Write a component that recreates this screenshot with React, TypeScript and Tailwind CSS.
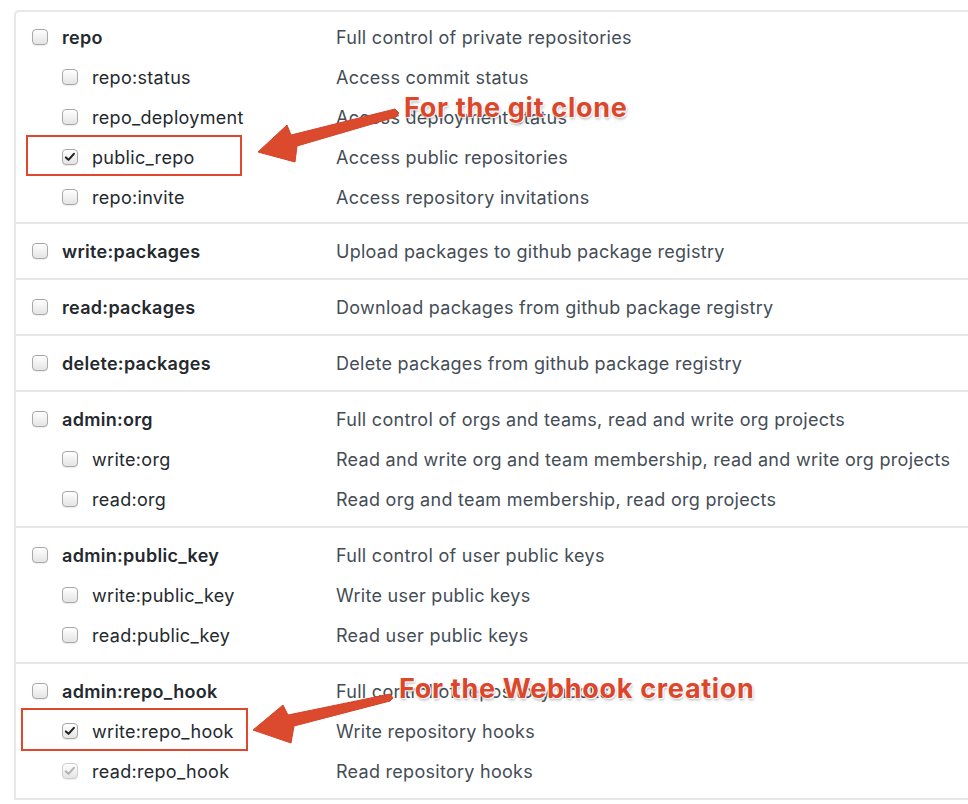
import React from 'react';

type Scope = {
  name: string;
  desc: string;
  checked?: boolean;
  disabled?: boolean;
  box?: { left: number; top: number; width: number; height: number };
};

type Group = Scope & { children?: Scope[] };

const groups: Group[] = [
  {
    name: 'repo',
    desc: 'Full control of private repositories',
    children: [
      { name: 'repo:status', desc: 'Access commit status' },
      { name: 'repo_deployment', desc: 'Access deployment status' },
      {
        name: 'public_repo',
        desc: 'Access public repositories',
        checked: true,
        box: { left: 10, top: -2, width: 216, height: 41 },
      },
      { name: 'repo:invite', desc: 'Access repository invitations' },
    ],
  },
  { name: 'write:packages', desc: 'Upload packages to github package registry' },
  { name: 'read:packages', desc: 'Download packages from github package registry' },
  { name: 'delete:packages', desc: 'Delete packages from github package registry' },
  {
    name: 'admin:org',
    desc: 'Full control of orgs and teams, read and write org projects',
    children: [
      { name: 'write:org', desc: 'Read and write org and team membership, read and write org projects' },
      { name: 'read:org', desc: 'Read org and team membership, read org projects' },
    ],
  },
  {
    name: 'admin:public_key',
    desc: 'Full control of user public keys',
    children: [
      { name: 'write:public_key', desc: 'Write user public keys' },
      { name: 'read:public_key', desc: 'Read user public keys' },
    ],
  },
  {
    name: 'admin:repo_hook',
    desc: 'Full control of repository hooks',
    children: [
      {
        name: 'write:repo_hook',
        desc: 'Write repository hooks',
        checked: true,
        box: { left: 5, top: -3, width: 227, height: 43 },
      },
      { name: 'read:repo_hook', desc: 'Read repository hooks', checked: true, disabled: true },
    ],
  },
];

const Checkbox = ({ checked, disabled }: { checked?: boolean; disabled?: boolean }) => (
  <span
    className={`inline-flex items-center justify-center w-4 h-4 shrink-0 rounded-[4px] border bg-gradient-to-b from-white to-[#e4e4e4] shadow-[0_1px_1px_rgba(0,0,0,0.08)] ${
      disabled ? 'border-[#cfcfcf]' : 'border-[#a8a8a8]'
    }`}
  >
    {checked && (
      <svg viewBox="0 0 16 16" className="w-3 h-3">
        <path
          d="M2.5 8.6 L6 11.8 L13.2 3.8"
          fill="none"
          stroke={disabled ? '#b3b3b3' : '#222'}
          strokeWidth="2.8"
          strokeLinecap="round"
          strokeLinejoin="round"
        />
      </svg>
    )}
  </span>
);

const Row = ({ scope, sub }: { scope: Scope; sub?: boolean }) => (
  <div className="relative flex items-center h-10">
    {scope.box && (
      <div
        className="absolute border-2 border-[#e0472c]"
        style={{ left: scope.box.left, top: scope.box.top, width: scope.box.width, height: scope.box.height }}
      />
    )}
    <div className={`flex items-center gap-[14px] w-[320px] shrink-0 ${sub ? 'pl-[46px]' : 'pl-4'}`}>
      <Checkbox checked={scope.checked} disabled={scope.disabled} />
      <span className={`text-[#24292e] tracking-[0.3px] ${sub ? 'font-normal' : 'font-semibold'}`}>{scope.name}</span>
    </div>
    <span className="text-[#444d56] tracking-[0.28px] whitespace-nowrap">{scope.desc}</span>
  </div>
);

const Arrow = ({ points }: { points: string }) => (
  <polygon points={points} fill="#dc4a2d" stroke="#d2432a" strokeWidth="1" strokeLinejoin="round" />
);

export default function App() {
  return (
    <div className="relative min-h-screen bg-white overflow-hidden pl-[14px] pt-[10px] font-['Inter',sans-serif] text-[18px]">
      <div className="border-l-2 border-t-2 border-[#e8e8e8] rounded-tl-[5px]">
        {groups.map((g, i) => (
          <div
            key={g.name}
            className={`border-b-2 border-[#e8e8e8] ${i === 0 ? 'py-[5px]' : 'py-[7px]'}`}
          >
            <Row scope={g} />
            {g.children?.map((c) => (
              <Row key={c.name} scope={c} sub />
            ))}
          </div>
        ))}
      </div>

      <svg className="absolute inset-0 pointer-events-none" width="968" height="804" viewBox="0 0 968 804">
        <Arrow points="258,152 287,125 291,135 395,109 399,113 396,117 297,146 295,162" />
        <Arrow points="253,730 283,705 288,715 390,694 393,698 390,701 294,726 291,743" />
      </svg>

      <div className="absolute left-[404px] top-[94px] text-[27px] font-bold leading-none text-[#dc472b] tracking-[0.7px] whitespace-nowrap font-['Inter',sans-serif] [text-shadow:0_0_2px_#fff,0_0_2px_#fff,1px_1px_1px_#fff,-1px_-1px_1px_#fff,1px_2px_3px_rgba(0,0,0,0.35)]">
        For the git clone
      </div>
      <div className="absolute left-[399px] top-[675px] text-[27px] font-bold leading-none text-[#dc472b] tracking-[0.7px] whitespace-nowrap font-['Inter',sans-serif] [text-shadow:0_0_2px_#fff,0_0_2px_#fff,1px_1px_1px_#fff,-1px_-1px_1px_#fff,1px_2px_3px_rgba(0,0,0,0.35)]">
        For the Webhook creation
      </div>
    </div>
  );
}
